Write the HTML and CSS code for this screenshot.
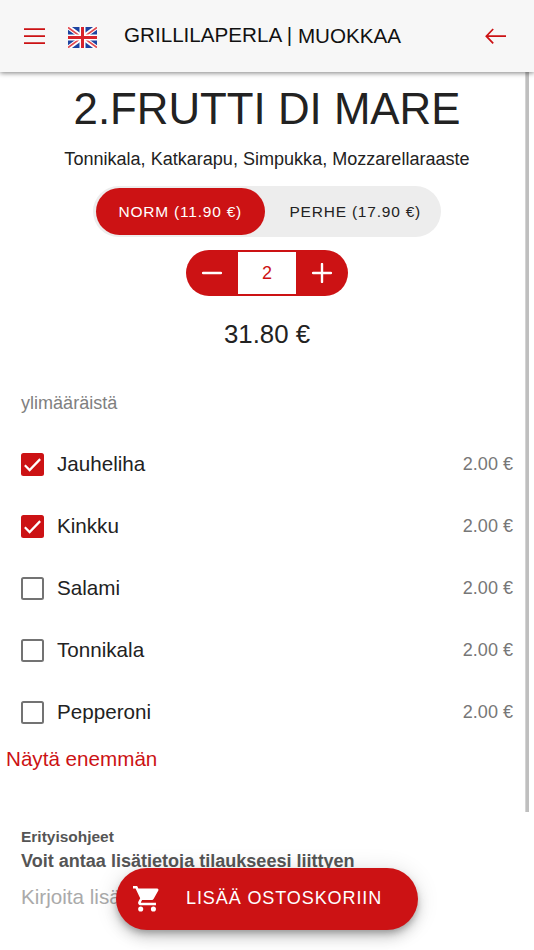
FILE: index.html
```html
<!DOCTYPE html>
<html lang="fi">
<head>
<meta charset="utf-8">
<title>Grillilaperla</title>
<link rel="stylesheet" href="styles.css">
</head>
<body>
<header class="toolbar">
  <svg class="menu" viewBox="0 0 22 17"><path d="M0 1.2h21M0 8.2h21M0 15.2h21"/></svg>
  <svg class="flag" viewBox="0 0 29 21">
    <path fill="#1d43a0" d="M0 0h29v21H0z"/>
    <path stroke="#fff" stroke-width="4.6" d="M0 0l29 21M29 0L0 21"/>
    <path stroke="#e2494f" stroke-width="1.7" d="M0 .4l14 10.2M29 .4L15 10.6M0 20.6l14-10.2M29 20.6L15 10.4"/>
    <path stroke="#fff" stroke-width="6" d="M14.5 0v21M0 10.5h29"/>
    <path stroke="#d8232b" stroke-width="3" d="M14.5 0v21M0 10.5h29"/>
  </svg>
  <h1 class="brand">GRILLILAPERLA | <span class="mode">MUOKKAA</span></h1>
  <svg class="back" viewBox="0 0 22 17"><path d="M21 8.2H1.5M8.2 1L1.3 8.2l6.9 7.2"/></svg>
</header>
<main class="content">
  <section class="product">
    <h2 class="name">2.FRUTTI DI MARE</h2>
    <p class="desc">Tonnikala, Katkarapu, Simpukka, Mozzarellaraaste</p>
    <div class="sizes">
      <button class="size size-on">NORM (11.90 €)</button>
      <button class="size">PERHE (17.90 €)</button>
    </div>
    <div class="qty">
      <button class="step"><svg viewBox="0 0 20 20"><path d="M1 10h18"/></svg></button>
      <span class="count">2</span>
      <button class="step"><svg viewBox="0 0 20 20"><path d="M1 10h18M10 1v18"/></svg></button>
    </div>
    <p class="total">31.80 €</p>
  </section>
  <section class="extras">
    <h3 class="label">ylimääräistä</h3>
    <div class="item"><svg class="box on" viewBox="0 0 24 24"><path d="M4 12.8l5 5L20 6.4"/></svg><span class="topping">Jauheliha</span><span class="price">2.00 €</span></div>
    <div class="item"><svg class="box on" viewBox="0 0 24 24"><path d="M4 12.8l5 5L20 6.4"/></svg><span class="topping">Kinkku</span><span class="price">2.00 €</span></div>
    <div class="item"><span class="box"></span><span class="topping">Salami</span><span class="price">2.00 €</span></div>
    <div class="item"><span class="box"></span><span class="topping">Tonnikala</span><span class="price">2.00 €</span></div>
    <div class="item"><span class="box"></span><span class="topping">Pepperoni</span><span class="price">2.00 €</span></div>
    <a class="more">Näytä enemmän</a>
  </section>
  <section class="notes">
    <h4 class="notes-title">Erityisohjeet</h4>
    <p class="notes-hint">Voit antaa lisätietoja tilaukseesi liittyen</p>
    <p class="notes-input">Kirjoita lisä</p>
  </section>
</main>
<div class="scrollbar"></div>
<button class="cart">
  <svg viewBox="0 0 27 27"><path d="M8 21.2a2.65 2.65 0 1 0 0 5.3 2.65 2.65 0 0 0 0-5.3zM0 0v2.7h2.65l4.8 10.1-1.8 3.2c-1 1.8.3 3.9 2.3 3.9h15.9v-2.6H8.5a.33.33 0 0 1-.3-.5l1.2-2.2h9.8c1 0 1.9-.5 2.3-1.4l4.8-8.6c.5-.9-.1-2-1.2-2H5.6L4.3 0zM21.2 21.2a2.65 2.65 0 1 0 0 5.3 2.65 2.65 0 0 0 0-5.3z"/></svg>
  <span class="cart-text">LISÄÄ OSTOSKORIIN</span>
</button>
</body>
</html>
```
FILE: styles.css
```css
* { box-sizing: border-box; }
body {
  margin: 0;
  height: 950px;
  overflow: hidden;
  position: relative;
  background: #fff;
  color: #222;
  font-family: "Liberation Sans", Arial, sans-serif;
}
h1, h2, h3, h4, p { margin: 0; font-weight: 400; white-space: nowrap; }
button { border: 0; padding: 0; font: inherit; }
svg { display: block; fill: none; }
.toolbar {
  display: flex;
  align-items: center;
  height: 72px;
  padding: 0 27px 0 24px;
  background: #f7f7f7;
  box-shadow: 0 1px 5px rgba(0, 0, 0, .5);
  position: relative;
  z-index: 1;
}
.menu, .back { width: 22px; height: 17px; stroke: #cc1214; stroke-width: 1.7; }
.flag { width: 29px; height: 21px; margin: 2px 0 0 22px; }
.brand { margin: -2px auto 0 27px; font-size: 20.64px; line-height: 28px; color: #111; }
.mode { position: relative; top: 1px; }
.product { display: flex; flex-direction: column; align-items: center; }
.name { margin-top: 10px; font-size: 43.8px; line-height: 54px; }
.desc { margin-top: 12px; font-size: 18.06px; line-height: 22px; }
.sizes {
  display: flex;
  width: 348px;
  height: 51px;
  margin-top: 16px;
  padding: 2px;
  border-radius: 26px;
  background: #ededed;
}
.size {
  width: 169px;
  height: 47px;
  margin-left: 1px;
  border-radius: 24px;
  background: none;
  color: #222;
  font-size: 15.48px;
  letter-spacing: .8px;
  white-space: nowrap;
}
.size:last-child { width: 174px; padding-left: 6px; }
.size-on { background: #cc1214; color: #fff; }
.qty {
  display: flex;
  width: 162px;
  height: 46px;
  margin-top: 13px;
  border-radius: 23px;
  background: #cc1214;
  overflow: hidden;
}
.step { width: 52px; display: grid; place-items: center; background: none; }
.step svg { width: 20px; height: 20px; stroke: #fff; stroke-width: 2.4; stroke-linecap: round; }
.count {
  width: 58px;
  height: 42px;
  margin-top: 2px;
  background: #fff;
  color: #cc1214;
  font-size: 18px;
  line-height: 42px;
  text-align: center;
}
.total { margin-top: 22px; font-size: 25.8px; line-height: 32px; }
.label { margin: 42px 0 20px 21px; font-size: 18.06px; line-height: 22px; color: #808080; }
.item { display: flex; align-items: center; height: 61.9px; padding: 0 21px; }
.box { width: 23px; height: 23px; border: 2px solid #737373; border-radius: 2.5px; }
.box.on { border: 0; background: #cc1214; stroke: #fff; stroke-width: 2.3; }
.topping { margin: 0 auto 2px 13px; font-size: 20.64px; }
.price { font-size: 18.06px; color: #777; }
.more { display: block; margin: 3px 0 0 6px; font-size: 20.64px; line-height: 26px; color: #cc1214; }
.notes { padding: 54px 0 0 21px; color: #555; }
.notes-title { font-size: 15.48px; line-height: 22px; font-weight: 700; }
.notes-hint { margin-top: 1px; font-size: 18.06px; line-height: 24px; font-weight: 700; }
.notes-input { margin-top: 11px; font-size: 20.64px; line-height: 26px; color: #aaa; }
.scrollbar { position: absolute; top: 72px; right: 5px; width: 4px; height: 740px; background: #bfbfbf; border-left: 1px solid #d4d4d4; }
.cart {
  position: absolute;
  left: 116px;
  top: 867.5px;
  width: 302px;
  height: 62px;
  padding-left: 17px;
  display: flex;
  align-items: center;
  border-radius: 31px;
  background: #cc1214;
  color: #fff;
  box-shadow: 0 4px 6px -1px rgba(0, 0, 0, .25), 0 8px 13px rgba(0, 0, 0, .14), 0 2px 23px rgba(0, 0, 0, .12);
}
.cart svg { width: 26px; height: 26px; fill: #fff; }
.cart-text { margin-left: 27px; font-size: 18.06px; letter-spacing: .88px; white-space: nowrap; }
```
